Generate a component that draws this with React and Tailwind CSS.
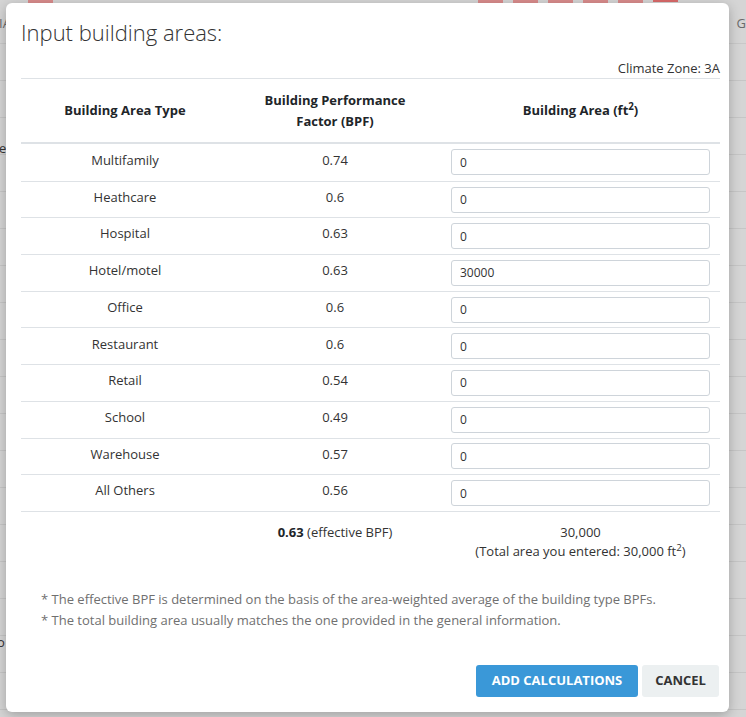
import React, { useState } from "react";

const AREA_TYPES = [
  { name: "Multifamily", bpf: "0.74", area: "0" },
  { name: "Heathcare", bpf: "0.6", area: "0" },
  { name: "Hospital", bpf: "0.63", area: "0" },
  { name: "Hotel/motel", bpf: "0.63", area: "30000" },
  { name: "Office", bpf: "0.6", area: "0" },
  { name: "Restaurant", bpf: "0.6", area: "0" },
  { name: "Retail", bpf: "0.54", area: "0" },
  { name: "School", bpf: "0.49", area: "0" },
  { name: "Warehouse", bpf: "0.57", area: "0" },
  { name: "All Others", bpf: "0.56", area: "0" },
];

function BackgroundPage() {
  // faint page that sits behind the modal overlay
  return (
    <div className="flex flex-col">
      <div className="flex h-[4px] items-start">
        <div className="ml-[28px] h-[4px] w-[25px] bg-[#d98c8c]" />
        <div className="ml-[425px] flex gap-[10px]">
          {[0, 1, 2, 3, 4].map((i) => (
            <div key={i} className="h-[4px] w-[25px] bg-[#d98c8c]" />
          ))}
          <div className="h-[2px] w-[25px] bg-[#d96a6a]" />
        </div>
      </div>
      <div className="flex h-[40px] items-center justify-between border-b border-[#c8c8c8] text-[13px] text-[#6a6a6a]">
        <span className="-ml-[1px]">IA</span>
        <span>G</span>
      </div>
      {Array.from({ length: 18 }).map((_, i) => (
        <div
          key={i}
          className={`flex h-[37px] border-b border-[#c6c6c6] text-[13px] leading-[10px] text-[#333] ${
            i === 2 ? "items-end pb-[1px]" : "items-start pt-[1px]"
          }`}
        >
          {i === 2 ? <span className="-ml-[1px]">e</span> : null}
          {i === 16 ? <span className="-ml-[3px]">o</span> : null}
        </div>
      ))}
    </div>
  );
}

export default function App() {
  const [areas, setAreas] = useState(AREA_TYPES.map((t) => t.area));

  return (
    <div className="relative h-[717px] w-[746px] overflow-hidden bg-[#d5d5d5] font-['Open_Sans','Noto_Sans',sans-serif]">
      <BackgroundPage />

      {/* Modal */}
      <div className="absolute left-[6px] top-[3px] w-[723px] rounded-[6px] bg-white pb-[15px] pl-[15px] pr-[9px] pt-[13px] shadow-[0_3px_12px_rgba(0,0,0,0.25)]">
        <h2 className="text-[22px] font-light leading-[33px] text-[#333]">Input building areas:</h2>

        <div className="mt-[9px] text-right text-[13px] leading-[20px] text-[#333]">Climate Zone: 3A</div>

        <div className="border-t border-[#dee2e6] text-[13px] text-[#333]">
          {/* header */}
          <div className="grid h-[65px] grid-cols-[208px_212px_1fr] items-center border-b-2 border-[#dee2e6] text-center font-bold leading-[21px] text-[#212529]">
            <div>Building Area Type</div>
            <div>
              Building Performance
              <br />
              Factor (BPF)
            </div>
            <div>
              Building Area (ft<sup>2</sup>)
            </div>
          </div>

          {/* rows */}
          {AREA_TYPES.map((t, i) => (
            <div
              key={t.name}
              className={`grid h-[36.7px] grid-cols-[208px_212px_1fr] items-center text-center ${
                i > 0 ? "border-t border-[#dee2e6]" : ""
              }`}
            >
              <div className="pb-[4px]">{t.name}</div>
              <div className="pb-[4px]">{t.bpf}</div>
              <div className="px-[10px]">
                <input
                  type="text"
                  value={areas[i]}
                  onChange={(e) => {
                    const next = [...areas];
                    next[i] = e.target.value;
                    setAreas(next);
                  }}
                  className="block h-[26px] w-full rounded-[3px] border border-[#ced4da] bg-white px-[8px] text-left text-[12px] text-[#333] outline-none"
                />
              </div>
            </div>
          ))}

          {/* totals */}
          <div className="grid grid-cols-[208px_212px_1fr] border-t border-[#dee2e6] pb-[12px] pt-[11px] text-center leading-[19px]">
            <div />
            <div>
              <span className="font-bold text-[#212529]">0.63</span> (effective BPF)
            </div>
            <div>
              30,000
              <br />
              (Total area you entered: 30,000 ft<sup>2</sup>)
            </div>
          </div>
        </div>

        <div className="mt-[16px] pl-[20px] text-[13px] leading-[21px] text-[#707070]">
          <p>* The effective BPF is determined on the basis of the area-weighted average of the building type BPFs.</p>
          <p>* The total building area usually matches the one provided in the general information.</p>
        </div>

        <div className="mt-[34px] flex justify-end gap-[4px] pr-[1px]">
          <button className="h-[32px] w-[162px] rounded-[3px] bg-[#3a98d8] text-[13px] font-bold text-white">
            ADD CALCULATIONS
          </button>
          <button className="h-[32px] w-[77px] rounded-[3px] bg-[#ecf0f1] text-[13px] font-bold text-[#333]">
            CANCEL
          </button>
        </div>
      </div>
    </div>
  );
}
